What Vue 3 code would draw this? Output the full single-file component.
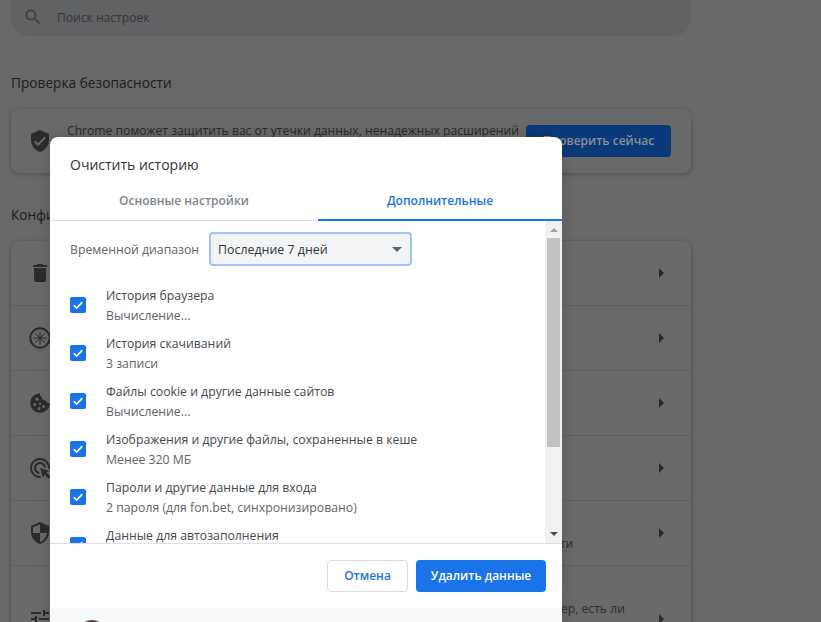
<script setup>
const rows = [
  { id: 'trash', h: 65 },
  { id: 'ext', h: 65 },
  { id: 'cookie', h: 65 },
  { id: 'click', h: 65 },
  { id: 'shield', h: 65, sub: 'Безопасный просмотр (защита от опасных сайтов) и другие настройки безопасности' },
  { id: 'tune', h: 106, sub: 'Определяет, какую информацию могут использовать и показывать сайты (например, есть ли' },
]
const items = [
  ['История браузера', 'Вычисление...'],
  ['История скачиваний', '3 записи'],
  ['Файлы cookie и другие данные сайтов', 'Вычисление...'],
  ['Изображения и другие файлы, сохраненные в кеше', 'Менее 320 МБ'],
  ['Пароли и другие данные для входа', '2 пароля (для fon.bet, синхронизировано)'],
  ['Данные для автозаполнения', ''],
]
</script>

<template>
  <div class="page">
    <div class="search">
      <svg class="search-ic" viewBox="0 0 24 24"><path d="M15.5 14h-.79l-.28-.27C15.41 12.59 16 11.11 16 9.5 16 5.91 13.09 3 9.5 3S3 5.91 3 9.5 5.91 16 9.5 16c1.61 0 3.09-.59 4.23-1.57l.27.28v.79l5 4.99L20.49 19l-4.99-5zm-6 0C7.01 14 5 11.99 5 9.5S7.01 5 9.5 5 14 7.01 14 9.5 11.99 14 9.5 14z"/></svg>
      <span>Поиск настроек</span>
    </div>
    <h2 class="head first">Проверка безопасности</h2>
    <div class="card safety">
      <svg class="row-ic" viewBox="0 0 24 24"><path d="M12 1L3 5v6c0 5.55 3.84 10.74 9 12 5.16-1.26 9-6.45 9-12V5l-9-4zm-2 16l-4-4 1.41-1.41L10 14.17l6.59-6.59L18 9l-8 8z"/></svg>
      <div class="safety-text">Chrome поможет защитить вас от утечки данных, ненадежных расширений</div>
      <div class="check-now">Проверить сейчас</div>
    </div>
    <h2 class="head second">Конфиденциальность и безопасность</h2>
    <div class="card list">
      <div v-for="r in rows" :key="r.id" class="row" :style="{ height: r.h + 'px' }">
        <svg class="row-ic" viewBox="0 0 24 24">
          <path v-if="r.id === 'trash'" d="M6 19c0 1.1.9 2 2 2h8c1.1 0 2-.9 2-2V7H6v12zM19 4h-3.5l-1-1h-5l-1 1H5v2h14V4z"/>
          <g v-else-if="r.id === 'ext'" class="wheel">
            <circle cx="12" cy="12" r="9.7" class="wheel-rim"/>
            <path d="M12 5.5v13M5.5 12h13M7.4 7.4l9.2 9.2M16.6 7.4l-9.2 9.2" class="wheel-spokes"/>
          </g>
          <path v-else-if="r.id === 'cookie'" fill-rule="evenodd" d="M12 2.2a9.8 9.8 0 1 0 9.8 9.8c-2.3.5-4-.9-4.3-2.9-2.3.3-4.1-1.4-3.9-3.7C12.2 5.1 11.5 3.6 12 2.2zM9 6.6a1.6 1.6 0 1 1 0 3.2 1.6 1.6 0 0 1 0-3.2zM6.8 12a1.5 1.5 0 1 1 0 3 1.5 1.5 0 0 1 0-3zM15.5 14a1.5 1.5 0 1 1 0 3 1.5 1.5 0 0 1 0-3zM11 16a1.5 1.5 0 1 1 0 3 1.5 1.5 0 0 1 0-3zM12 11.4a1.2 1.2 0 1 1 0 2.4 1.2 1.2 0 0 1 0-2.4z"/>
          <path v-else-if="r.id === 'click'" d="M11.71 17.99C8.53 17.84 6 15.21 6 12c0-3.31 2.69-6 6-6 3.21 0 5.84 2.53 5.99 5.71l-2.1-.63C15.48 9.31 13.89 8 12 8c-2.21 0-4 1.79-4 4 0 1.89 1.31 3.48 3.08 3.89l.63 2.1zM22 12c0 .3-.01.6-.04.9l-1.97-.59c.01-.1.01-.21.01-.31 0-4.42-3.58-8-8-8s-8 3.58-8 8 3.58 8 8 8c.1 0 .21 0 .31-.01l.59 1.97c-.3.03-.6.04-.9.04-5.52 0-10-4.48-10-10S6.48 2 12 2s10 4.48 10 10zm-3.77 4.26L22 15l-10-3 3 10 1.26-3.77 4.27 4.27 1.98-1.98-4.28-4.26z"/>
          <path v-else-if="r.id === 'shield'" d="M12 1L3 5v6c0 5.55 3.84 10.74 9 12 5.16-1.26 9-6.45 9-12V5l-9-4zm0 10.99h7c-.53 4.12-3.28 7.79-7 8.94V12H5V6.3l7-3.11v8.8z"/>
          <path v-else d="M3 17v2h6v-2H3zM3 5v2h10V5H3zm10 16v-2h8v-2h-8v-2h-2v6h2zM7 9v2H3v2h4v2h2V9H7zm14 4v-2H11v2h10zm-6-4h2V7h4V5h-4V3h-2v6z"/>
        </svg>
        <div class="row-text">
          <span v-if="r.sub" class="row-sub">{{ r.sub }}</span>
        </div>
        <i class="arrow"></i>
      </div>
    </div>

    <div class="dialog">
      <div class="title">Очистить историю</div>
      <div class="tabs">
        <div class="tab basic">Основные настройки</div>
        <div class="tab active">Дополнительные</div>
      </div>
      <div class="body">
        <div class="scroll-content">
          <div class="range">
            <span class="range-label">Временной диапазон</span>
            <div class="select"><span>Последние 7 дней</span><i class="caret"></i></div>
          </div>
          <div v-for="it in items" :key="it[0]" class="item">
            <span class="box">
              <svg viewBox="0 0 16 16"><path d="M3.8 8.3l2.9 2.8 5.6-6" /></svg>
            </span>
            <div class="item-text">
              <div class="item-label">{{ it[0] }}</div>
              <div v-if="it[1]" class="item-sub">{{ it[1] }}</div>
            </div>
          </div>
        </div>
        <div class="scrollbar">
          <i class="sb-up"></i>
          <div class="thumb"></div>
          <i class="sb-down"></i>
        </div>
      </div>
      <div class="footer">
        <div class="btn cancel">Отмена</div>
        <div class="btn primary">Удалить данные</div>
      </div>
      <div class="account"><span class="avatar"></span></div>
    </div>
  </div>
</template>

<style>
html, body { margin: 0; background: #676767; overflow: hidden; }
</style>

<style scoped>
.page {
  position: relative;
  width: 821px;
  height: 622px;
  overflow: hidden;
  box-sizing: border-box;
  padding: 0 130px 0 11px;
  background: #686868;
  font-family: "Open Sans", "Noto Sans", sans-serif;
  font-size: 12.25px;
  color: #2b2b2b;
}
.search {
  height: 38px;
  margin-top: -2px;
  border-radius: 0 0 18px 18px;
  background: #616264;
  display: flex;
  align-items: center;
  gap: 14px;
  padding-left: 12px;
  color: #363739;
  font-size: 12.1px;
  box-sizing: border-box;
}
.search-ic { width: 20px; height: 20px; fill: #3f4042; }
.head {
  margin: 0;
  font-weight: 400;
  font-size: 13.7px;
  line-height: 18px;
  color: #221c22;
}
.first { padding-top: 38px; padding-bottom: 17px; }
.second { padding-top: 33px; padding-bottom: 17px; }
.card {
  background: #696969;
  border-radius: 8px;
  box-shadow: 0 1px 4px rgba(0, 0, 0, .28);
}
.safety {
  height: 64px;
  display: flex;
  align-items: center;
  padding: 0 20px 0 17px;
  position: relative;
}
.row-ic { width: 24px; height: 24px; fill: #2c2c2c; flex: none; }
.wheel-rim { fill: none; stroke: #2c2c2c; stroke-width: 2; }
.wheel-spokes { fill: none; stroke: #2c2c2c; stroke-width: 1; }
.safety-text {
  margin-left: 15px;
  width: 453px;
  flex: none;
  white-space: nowrap;
  align-self: flex-start;
  padding-top: 13px;
  line-height: 18px;
  font-size: 12.15px;
}
.check-now {
  margin-left: 6px;
  width: 145px;
  height: 32px;
  flex: none;
  background: #0a3a7a;
  border-radius: 4px;
  text-align: center;
  line-height: 32px;
  font-weight: 600;
  font-size: 12px;
  color: #8c8f93;
}
.list { height: 480px; overflow: hidden; }
.row {
  display: flex;
  align-items: center;
  box-sizing: border-box;
  border-bottom: 1px solid #5e5e5e;
  padding: 0 27px 0 17px;
}
.row-text {
  flex: 1;
  min-width: 0;
  margin-left: 15px;
  align-self: flex-start;
  padding-top: 34px;
  box-sizing: border-box;
}
.row-sub {
  display: block;
  white-space: nowrap;
  line-height: 18px;
  font-size: 12.18px;
  color: #2f2f2f;
}
.arrow {
  width: 0;
  height: 0;
  flex: none;
  border-left: 5px solid #2a2a2a;
  border-top: 5px solid transparent;
  border-bottom: 5px solid transparent;
}
.dialog {
  position: absolute;
  left: 50px;
  top: 137px;
  width: 512px;
  height: 520px;
  background: #fff;
  border-radius: 8px 8px 0 0;
  box-shadow: 0 0 16px rgba(0, 0, 0, .14);
  display: flex;
  flex-direction: column;
  overflow: hidden;
}
.title {
  height: 45px;
  padding: 17px 0 0 20px;
  box-sizing: border-box;
  font-size: 14px;
  line-height: 22px;
  color: #303134;
}
.tabs {
  display: flex;
  height: 39px;
  box-sizing: border-box;
  border-bottom: 1px solid #e0e0e0;
}
.tab {
  text-align: center;
  font-weight: 600;
  font-size: 12px;
  line-height: 38px;
  color: #80868b;
  box-sizing: border-box;
  height: 38px;
}
.tab.basic { width: 268px; }
.tab.active {
  width: 244px;
  color: #1a73e8;
  border-bottom: 2px solid #1a73e8;
  height: 39px;
}
.body {
  height: 322px;
  flex: none;
  display: flex;
  overflow: hidden;
  border-bottom: 1px solid #e0e0e0;
}
.scroll-content { flex: 1; padding: 0 20px; min-width: 0; overflow: hidden; }
.range {
  display: flex;
  align-items: center;
  height: 34px;
  margin-top: 11px;
  margin-bottom: 20.3px;
}
.range-label { color: #5f6368; white-space: nowrap; width: 139px; flex: none; }
.select {
  width: 203px;
  height: 34px;
  box-sizing: border-box;
  background: #f1f3f4;
  border: 2px solid #a1c2fa;
  border-radius: 4px;
  display: flex;
  align-items: center;
  justify-content: space-between;
  padding: 0 8px 0 7px;
  color: #35363a;
  font-size: 12.4px;
}
.caret {
  width: 0;
  height: 0;
  border-top: 5px solid #5f6368;
  border-left: 5px solid transparent;
  border-right: 5px solid transparent;
}
.item {
  height: 48px;
  display: flex;
  align-items: flex-start;
  gap: 20px;
}
.box {
  width: 16px;
  height: 16px;
  margin-top: 11px;
  background: #1a73e8;
  border-radius: 2px;
  flex: none;
}
.box svg { display: block; width: 16px; height: 16px; fill: none; stroke: #fff; stroke-width: 1.6; }
.item-label { color: #45494c; line-height: 20px; white-space: nowrap; }
.item-sub { color: #5f6368; line-height: 20px; white-space: nowrap; }
.scrollbar {
  width: 17px;
  flex: none;
  background: #f1f1f1;
  display: flex;
  flex-direction: column;
  align-items: center;
  box-sizing: border-box;
  height: 322px;
}
.sb-up {
  margin-top: 7px;
  width: 0; height: 0;
  border-bottom: 4px solid #a3a3a3;
  border-left: 4px solid transparent;
  border-right: 4px solid transparent;
}
.thumb { width: 13px; height: 209px; margin-top: 6px; background: #c1c1c1; }
.sb-down {
  margin-top: auto;
  margin-bottom: 7px;
  width: 0; height: 0;
  border-top: 4px solid #505050;
  border-left: 4px solid transparent;
  border-right: 4px solid transparent;
}
.footer {
  height: 64px;
  flex: none;
  display: flex;
  justify-content: flex-end;
  align-items: center;
  gap: 8px;
  padding-right: 16px;
  box-sizing: border-box;
}
.btn {
  height: 32px;
  border-radius: 4px;
  box-sizing: border-box;
  text-align: center;
  font-weight: 600;
  font-size: 12px;
  line-height: 32px;
}
.cancel { width: 81px; border: 1px solid #dadce0; color: #1a73e8; line-height: 30px; }
.primary { width: 130px; background: #1a73e8; color: #fff; }
.account { flex: 1; background: #f8f9fa; padding: 12px 0 0 28px; }
.avatar { display: block; width: 28px; height: 28px; border-radius: 50%; background: #5b4038; }
</style>
